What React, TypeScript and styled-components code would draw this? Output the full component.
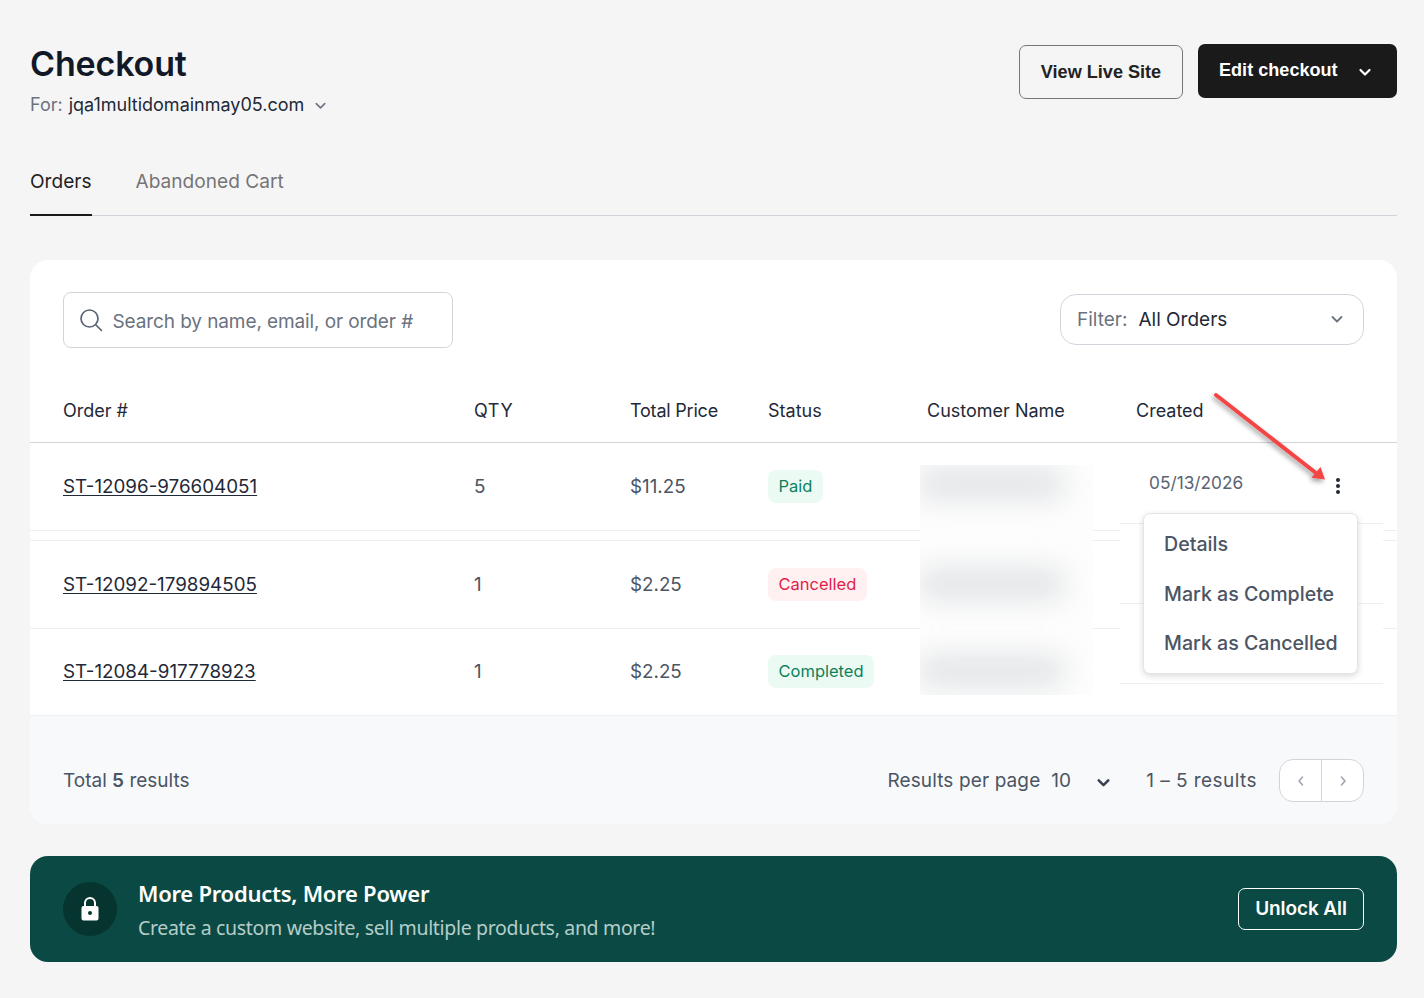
import styled, { createGlobalStyle } from "styled-components";

const Colors = {
  page: "#f5f5f5",
  ink: "#111827",
  slate: "#4b5563",
  line: "#d1d5db",
  faint: "#eeeff1",
  teal: "#0b4a44",
};

const GlobalStyle = createGlobalStyle`
  html, body {
    margin: 0;
    padding: 0;
    background: ${Colors.page};
    font-family: "Inter", "Liberation Sans", sans-serif;
    color: ${Colors.ink};
  }
  * { box-sizing: border-box; }
`;

const Page = styled.div`
  position: relative;
  width: 1424px;
  height: 998px;
  padding: 44px 27px 0 30px;
  overflow: hidden;
`;

const Header = styled.header`
  display: flex;
  justify-content: space-between;
  align-items: flex-start;
  height: 78px;
`;

const Title = styled.h1`
  margin: 0;
  font-size: 34px;
  line-height: 40px;
  font-weight: 600;
  letter-spacing: -0.15px;
  color: ${Colors.ink};
`;

const Domain = styled.div`
  display: flex;
  align-items: center;
  margin-top: 10px;
  font-size: 18px;
  line-height: 22px;
  color: #1f2937;

  span {
    color: #6b7280;
    margin-right: 6px;
  }
  svg {
    margin-left: 9px;
    color: #6b7280;
  }
`;

const HeaderActions = styled.div`
  display: flex;
  gap: 15px;
  align-items: flex-start;
`;

const OutlineButton = styled.button`
  width: 164px;
  height: 54px;
  margin-top: 1px;
  background: transparent;
  border: 1px solid #777;
  border-radius: 7px;
  font-family: "Liberation Sans", sans-serif;
  font-weight: 700;
  font-size: 18.1px;
  color: #222;
`;

const DarkButton = styled.button`
  display: flex;
  align-items: center;
  width: 199px;
  height: 54px;
  padding: 0 0 2px 21px;
  background: #1a1a1a;
  border: none;
  border-radius: 7px;
  font-family: "Liberation Sans", sans-serif;
  font-weight: 700;
  font-size: 18.1px;
  color: #fff;

  svg {
    margin: 3px 0 0 19px;
  }
`;

const Tabs = styled.nav`
  display: flex;
  gap: 44px;
  height: 94px;
  padding-top: 46px;
  border-bottom: 1px solid ${Colors.line};
`;

const Tab = styled.div<{ active?: boolean }>`
  height: 48px;
  font-size: 19.1px;
  line-height: 26px;
  color: ${(props) => (props.active ? "#1f1f1f" : "#757575")};
  border-bottom: ${(props) => (props.active ? "2px solid #1a1a1a" : "none")};
`;

const Card = styled.section`
  position: relative;
  margin-top: 44px;
  height: 564px;
  background: #fff;
  border-radius: 18px;
  overflow: hidden;
`;

const Toolbar = styled.div`
  display: flex;
  justify-content: space-between;
  align-items: center;
  height: 121px;
  padding: 0 33px;
`;

const Search = styled.div`
  display: flex;
  align-items: center;
  gap: 9.5px;
  width: 390px;
  height: 56px;
  margin-top: -1px;
  padding: 2px 0 0 15px;
  border: 1px solid ${Colors.line};
  border-radius: 8px;
  font-size: 19px;
  letter-spacing: -0.1px;
  color: #6b7280;

  svg {
    margin-top: -3px;
  }
`;

const Filter = styled.div`
  display: flex;
  align-items: center;
  width: 304px;
  height: 51px;
  padding: 0 18px 0 16px;
  margin-top: -2px;
  border: 1px solid ${Colors.line};
  border-radius: 16px;
  font-size: 19px;
  color: #6b7280;

  b {
    font-weight: 400;
    color: #1f2937;
    margin-left: 11px;
    flex: 1;
  }
  svg {
    margin-top: -2px;
  }
`;

const columns = "411px 156px 138px 159px 209px 1fr";

const HeadRow = styled.div`
  display: grid;
  grid-template-columns: ${columns};
  align-items: center;
  height: 62px;
  padding: 0 0 3px 33px;
  border-bottom: 1px solid ${Colors.line};
  font-size: 18px;
  color: #1f2937;
`;

const HeadCell = styled.div<{ $track?: number }>`
  letter-spacing: ${(props) => props.$track ?? 0}px;
`;

const Row = styled.div<{ $h: number; $lift?: boolean }>`
  display: grid;
  grid-template-columns: ${columns};
  align-items: center;
  height: ${(props) => props.$h}px;
  padding: 0 0 ${(props) => (props.$lift ? "2px" : "0")} 33px;
  border-bottom: 1px solid ${Colors.faint};
  font-size: 18.8px;
  color: #4b5563;
`;

// the reference has a seam between the first two rows
const RowSeam = styled.div`
  height: 10px;
  border-bottom: 1px solid ${Colors.faint};
`;

const OrderLink = styled.a`
  color: #1f2937;
  text-decoration: underline;
  text-underline-offset: 2px;
  text-decoration-thickness: 1px;
`;

const Badge = styled.span<{ $tone: "green" | "red" }>`
  display: inline-block;
  padding: 0 10.5px;
  height: 33px;
  line-height: 33px;
  border-radius: 8px;
  font-size: 16.5px;
  background: ${(props) => (props.$tone === "green" ? "#ebfbf3" : "#fff0f1")};
  color: ${(props) => (props.$tone === "green" ? "#0f7f5c" : "#e11d48")};
`;

const Footer = styled.div`
  display: flex;
  align-items: center;
  justify-content: space-between;
  height: 108px;
  padding: 21px 33px 0;
  background: #f8f9fb;
  font-size: 19px;
  color: ${Colors.slate};

  b {
    font-weight: 600;
  }
`;

const Pager = styled.div`
  display: flex;
  align-items: center;
`;

const PerPage = styled.span`
  margin-right: 24px;
  letter-spacing: 0.12px;
`;

const PerPageChevron = styled.span`
  display: flex;
  margin: 4px 34px 0 0;
  color: #374151;
`;

const RangeText = styled.span`
  margin-right: 22px;
  letter-spacing: 0.45px;
`;

const PagerButtons = styled.div`
  display: flex;
  width: 85px;
  height: 43px;
  background: #fff;
  border: 1px solid ${Colors.line};
  border-radius: 14px;
`;

const PagerButton = styled.div<{ $divided?: boolean }>`
  flex: 1;
  display: flex;
  align-items: center;
  justify-content: center;
  color: #9ca3af;
  border-left: ${(props) => (props.$divided ? `1px solid ${Colors.line}` : "none")};
`;

const Banner = styled.section`
  display: flex;
  align-items: center;
  height: 106px;
  margin-top: 32px;
  padding: 0 33px;
  background: ${Colors.teal};
  border-radius: 18px;
  font-family: "Noto Sans", sans-serif;
`;

const LockCircle = styled.div`
  display: flex;
  align-items: center;
  justify-content: center;
  width: 54px;
  height: 54px;
  border-radius: 50%;
  background: #06352f;
  margin-right: 21px;
`;

const BannerText = styled.div`
  flex: 1;
  padding-top: 2px;
`;

const BannerTitle = styled.div`
  font-size: 22px;
  line-height: 30px;
  font-weight: 600;
  letter-spacing: -0.25px;
  color: #fff;
`;

const BannerSub = styled.div`
  margin-top: 6px;
  font-size: 19.5px;
  line-height: 28px;
  letter-spacing: -0.33px;
  color: #b5cdc9;
`;

const UnlockButton = styled.button`
  width: 126px;
  height: 42px;
  padding-bottom: 3px;
  background: transparent;
  border: 1px solid #fff;
  border-radius: 7px;
  font-family: "Inter", sans-serif;
  font-size: 19px;
  font-weight: 600;
  letter-spacing: -0.1px;
  color: #fff;
`;

/* screenshot edits that sit on top of the table */
const BlurPatch = styled.div`
  position: absolute;
  left: 920px;
  top: 465px;
  width: 173px;
  height: 230px;
  background: #fdfdfd;
  overflow: hidden;
`;

const BlurBar = styled.div<{ $top: number }>`
  position: absolute;
  left: -4px;
  top: ${(props) => props.$top}px;
  width: 150px;
  height: 32px;
  border-radius: 16px;
  background: #e2e4e6;
  filter: blur(14px);
`;

const CreatedPatch = styled.div`
  position: absolute;
  left: 1120px;
  top: 443px;
  width: 263px;
  height: 241px;
  background: #fff;
  border-bottom: 1px solid ${Colors.faint};
`;

const PatchLine = styled.div<{ $top: number }>`
  position: absolute;
  left: 0;
  right: 0;
  top: ${(props) => props.$top}px;
  height: 1px;
  background: ${Colors.faint};
`;

const DateText = styled.div`
  position: absolute;
  left: 29px;
  top: 28px;
  font-size: 17.3px;
  line-height: 24px;
  color: #5b6472;
`;

const Kebab = styled.svg`
  position: absolute;
  left: 1332px;
  top: 477px;
`;

const Menu = styled.div`
  position: absolute;
  left: 1143px;
  top: 513px;
  display: flex;
  flex-direction: column;
  width: 215px;
  height: 161px;
  padding: 6px 0 0 20px;
  background: #fff;
  border: 1px solid #e2e4e8;
  border-radius: 7px;
  box-shadow: 0 2px 6px rgba(17, 24, 39, 0.16);
`;

const MenuItem = styled.div`
  height: 49.5px;
  line-height: 49.5px;
  font-size: 19.6px;
  font-weight: 500;
  color: #4b5563;
  white-space: nowrap;
`;

const Arrow = styled.svg`
  position: absolute;
  left: 1205px;
  top: 385px;
`;

const Chevron = ({ size = 16, width = 2 }: { size?: number; width?: number }) => (
  <svg width={size} height={size} viewBox="0 0 16 16" fill="none" stroke="currentColor" strokeWidth={width} strokeLinecap="round" strokeLinejoin="round">
    <path d="M3.5 6l4.5 4.5L12.5 6" />
  </svg>
);

const rows = [
  { id: "ST-12096-976604051", qty: 5, price: "$11.25", status: "Paid", tone: "green" as const, h: 88, seam: true },
  { id: "ST-12092-179894505", qty: 1, price: "$2.25", status: "Cancelled", tone: "red" as const, h: 88 },
  { id: "ST-12084-917778923", qty: 1, price: "$2.25", status: "Completed", tone: "green" as const, h: 87, lift: true },
];

const App = () => {
  return (
    <Page>
      <GlobalStyle />
      <Header>
        <div>
          <Title>Checkout</Title>
          <Domain>
            <span>For:</span> jqa1multidomainmay05.com
            <Chevron size={15} width={1.7} />
          </Domain>
        </div>
        <HeaderActions>
          <OutlineButton>View Live Site</OutlineButton>
          <DarkButton>
            Edit checkout
            <Chevron size={16} width={2.2} />
          </DarkButton>
        </HeaderActions>
      </Header>

      <Tabs>
        <Tab active>Orders</Tab>
        <Tab>Abandoned Cart</Tab>
      </Tabs>

      <Card>
        <Toolbar>
          <Search>
            <svg width="24" height="24" viewBox="0 0 24 24" fill="none" stroke="#5b6472" strokeWidth="1.7" strokeLinecap="round">
              <circle cx="10.5" cy="10.5" r="8.5" />
              <path d="M17 17l5.5 5.5" />
            </svg>
            Search by name, email, or order #
          </Search>
          <Filter>
            Filter:
            <b>All Orders</b>
            <Chevron size={16} width={1.8} />
          </Filter>
        </Toolbar>

        <HeadRow>
          <HeadCell>Order #</HeadCell>
          <HeadCell $track={0.6}>QTY</HeadCell>
          <HeadCell $track={-0.2}>Total Price</HeadCell>
          <HeadCell>Status</HeadCell>
          <HeadCell>Customer Name</HeadCell>
          <HeadCell>Created</HeadCell>
        </HeadRow>

        {rows.map((row) => (
          <div key={row.id}>
            <Row $h={row.h} $lift={row.lift}>
              <div>
                <OrderLink>{row.id}</OrderLink>
              </div>
              <div>{row.qty}</div>
              <div>{row.price}</div>
              <div>
                <Badge $tone={row.tone}>{row.status}</Badge>
              </div>
            </Row>
            {row.seam && <RowSeam />}
          </div>
        ))}

        <Footer>
          <div>
            Total <b>5</b> results
          </div>
          <Pager>
            <PerPage>Results per page&nbsp; 10</PerPage>
            <PerPageChevron>
              <Chevron size={17} width={2.4} />
            </PerPageChevron>
            <RangeText>1 – 5 results</RangeText>
            <PagerButtons>
              <PagerButton>
                <svg width="14" height="14" viewBox="0 0 14 14" fill="none" stroke="currentColor" strokeWidth="1.5" strokeLinecap="round" strokeLinejoin="round">
                  <path d="M8.5 3L5 7l3.5 4" />
                </svg>
              </PagerButton>
              <PagerButton $divided>
                <svg width="14" height="14" viewBox="0 0 14 14" fill="none" stroke="currentColor" strokeWidth="1.5" strokeLinecap="round" strokeLinejoin="round">
                  <path d="M5.5 3L9 7l-3.5 4" />
                </svg>
              </PagerButton>
            </PagerButtons>
          </Pager>
        </Footer>
      </Card>

      <Banner>
        <LockCircle>
          <svg width="20" height="26" viewBox="0 0 20 26">
            <path d="M5 10V7a5 5 0 0 1 10 0v3" fill="none" stroke="#fff" strokeWidth="2" />
            <rect x="1.5" y="10" width="17" height="14.5" rx="2" fill="#fff" />
            <circle cx="10" cy="17" r="2" fill="#06352f" />
          </svg>
        </LockCircle>
        <BannerText>
          <BannerTitle>More Products, More Power</BannerTitle>
          <BannerSub>Create a custom website, sell multiple products, and more!</BannerSub>
        </BannerText>
        <UnlockButton>Unlock All</UnlockButton>
      </Banner>

      <BlurPatch>
        <BlurBar $top={3} />
        <BlurBar $top={103} />
        <BlurBar $top={190} />
      </BlurPatch>

      <CreatedPatch>
        <DateText>05/13/2026</DateText>
        <PatchLine $top={80} />
        <PatchLine $top={160} />
      </CreatedPatch>

      <Kebab width="12" height="18" viewBox="0 0 12 18" fill="#1f2937">
        <circle cx="6" cy="3" r="2" />
        <circle cx="6" cy="9" r="2" />
        <circle cx="6" cy="15" r="2" />
      </Kebab>

      <Menu>
        <MenuItem>Details</MenuItem>
        <MenuItem>Mark as Complete</MenuItem>
        <MenuItem>Mark as Cancelled</MenuItem>
      </Menu>

      <Arrow width="130" height="110" viewBox="0 0 130 110">
        <defs>
          <filter id="arrow-shadow" x="-20%" y="-20%" width="140%" height="140%">
            <feDropShadow dx="-1.5" dy="2.5" stdDeviation="2.5" floodColor="#000" floodOpacity="0.4" />
          </filter>
        </defs>
        <g filter="url(#arrow-shadow)" fill="#f44545">
          <path d="M11 10L111 88" stroke="#f44545" strokeWidth="4" strokeLinecap="round" />
          <path d="M120 94.5L106.5 92.8L115.5 82Z" />
        </g>
      </Arrow>
    </Page>
  );
};

export default App;
